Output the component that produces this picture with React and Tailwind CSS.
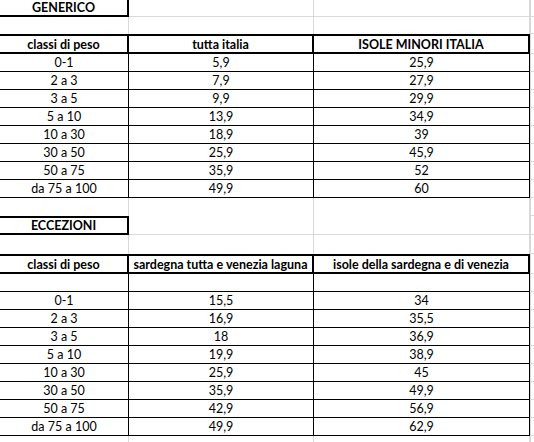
const GRID = 'border-[#d9d9d9]';

const generico = [
    ['0-1', '5,9', '25,9'],
    ['2 a 3', '7,9', '27,9'],
    ['3 a 5', '9,9', '29,9'],
    ['5 a 10', '13,9', '34,9'],
    ['10 a 30', '18,9', '39'],
    ['30 a 50', '25,9', '45,9'],
    ['50 a 75', '35,9', '52'],
    ['da 75 a 100', '49,9', '60'],
];

const eccezioni = [
    ['0-1', '15,5', '34'],
    ['2 a 3', '16,9', '35,5'],
    ['3 a 5', '18', '36,9'],
    ['5 a 10', '19,9', '38,9'],
    ['10 a 30', '25,9', '45'],
    ['30 a 50', '35,9', '49,9'],
    ['50 a 75', '42,9', '56,9'],
    ['da 75 a 100', '49,9', '62,9'],
];

// one spreadsheet row: A | B | C | rest of the sheet
const Row = ({ h, cells }) => (
    <div className={`flex ${h}`}>
        <div className={`w-[129px] shrink-0 flex items-center justify-center pt-[2px] ${cells[0].c}`}>{cells[0].t}</div>
        <div className={`w-[185px] shrink-0 flex items-center justify-center pt-[2px] ${cells[1].c}`}>{cells[1].t}</div>
        <div className={`w-[216px] shrink-0 flex items-center justify-center pt-[2px] ${cells[2].c}`}>{cells[2].t}</div>
        <div className={`flex-1 border-b border-l ${GRID}`}></div>
    </div>
);

const blank = { t: '', c: `border-r ${GRID}` };

const BlankRow = ({ h }) => (
    <Row h={h} cells={[blank, blank, blank]} />
);

const TitleRow = ({ title, h, top }) => (
    <Row
        h={h}
        cells={[
            { t: title, c: `font-bold border-b-2 border-r-2 border-black ${top ? 'border-t-2' : ''}` },
            { t: '', c: `border-r border-b ${GRID}` },
            { t: '', c: `border-r border-b ${GRID}` },
        ]}
    />
);

const HeaderRow = ({ labels }) => (
    <Row
        h="h-[20px]"
        cells={labels.map((t) => ({ t, c: 'font-bold border-y-2 border-r-2 border-black' }))}
    />
);

const DataRow = ({ row }) => (
    <Row
        h="h-[18px]"
        cells={row.map((t) => ({ t, c: 'border-r border-b border-black' }))}
    />
);

export default function App() {
    return (
        <div className="w-[534px] h-[442px] overflow-hidden bg-white text-black text-[12.5px] leading-none font-['Lato',sans-serif]">
            <TitleRow title="GENERICO" h="h-[17px]" />
            <BlankRow h="h-[17px]" />
            <HeaderRow labels={['classi di peso', 'tutta italia', 'ISOLE MINORI ITALIA']} />
            {generico.map((r) => <DataRow key={r[0]} row={r} />)}

            <BlankRow h="h-[18px]" />
            <TitleRow title="ECCEZIONI" h="h-[19px]" top />
            <BlankRow h="h-[19px]" />
            <HeaderRow labels={['classi di peso', 'sardegna tutta e venezia laguna', 'isole della sardegna e di venezia']} />
            <DataRow row={['', '', '']} />
            {eccezioni.map((r) => <DataRow key={r[0]} row={r} />)}
            <BlankRow h="h-[18px]" />
        </div>
    );
}
